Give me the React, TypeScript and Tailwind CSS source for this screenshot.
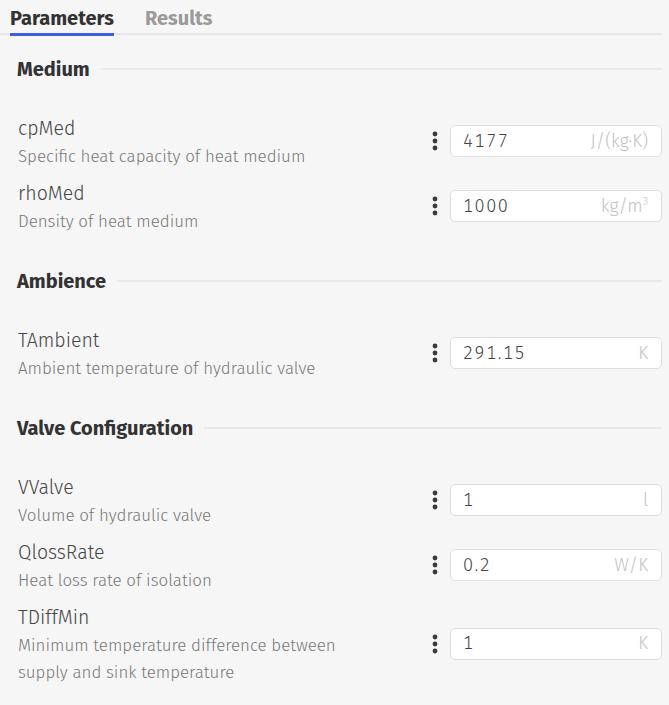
import React from "react";

type Param = {
  name: string;
  description: string;
  value: string;
  unit: React.ReactNode;
};

type Section = {
  title: string;
  params: Param[];
};

const sections: Section[] = [
  {
    title: "Medium",
    params: [
      { name: "cpMed", description: "Specific heat capacity of heat medium", value: "4177", unit: "J/(kg·K)" },
      {
        name: "rhoMed",
        description: "Density of heat medium",
        value: "1000",
        unit: (
          <>
            kg/m<sup className="text-[11px] relative -top-[7px]">3</sup>
          </>
        ),
      },
    ],
  },
  {
    title: "Ambience",
    params: [
      { name: "TAmbient", description: "Ambient temperature of hydraulic valve", value: "291.15", unit: "K" },
    ],
  },
  {
    title: "Valve Configuration",
    params: [
      { name: "VValve", description: "Volume of hydraulic valve", value: "1", unit: "l" },
      { name: "QlossRate", description: "Heat loss rate of isolation", value: "0.2", unit: "W/K" },
      {
        name: "TDiffMin",
        description: "Minimum temperature difference between supply and sink temperature",
        value: "1",
        unit: "K",
      },
    ],
  },
];

function KebabIcon() {
  return (
    <svg width="6" height="20" viewBox="0 0 6 20" className="shrink-0">
      <circle cx="3" cy="3" r="2.4" fill="#3a3a3a" />
      <circle cx="3" cy="10" r="2.4" fill="#3a3a3a" />
      <circle cx="3" cy="17" r="2.4" fill="#3a3a3a" />
    </svg>
  );
}

function ParamRow({ p }: { p: Param }) {
  return (
    <div className="flex items-center py-[5px] pl-[18px] pr-[7px]">
      <div className="flex-1 min-w-0 pr-[20px]">
        <div className="text-[19.5px] leading-[28px] font-light text-[#454545]">{p.name}</div>
        <div className="text-[16.9px] leading-[27px] font-light text-[#787878] max-w-[345px]">{p.description}</div>
      </div>
      <div className="flex items-center gap-[12px] mb-[3px]">
        <KebabIcon />
        <div className="w-[212px] h-[32px] bg-white border border-[#dedede] rounded-[5px] flex items-center justify-between pl-[12px] pr-[13px]">
          <span className="text-[18px] font-light text-[#444] tabular-nums tracking-[1.5px]">{p.value}</span>
          <span className="text-[18px] font-light text-[#c2c2c2]">{p.unit}</span>
        </div>
      </div>
    </div>
  );
}

export default function App() {
  return (
    <div
      className="w-[669px] h-[705px] bg-[#f6f6f6] overflow-hidden"
      style={{ fontFamily: '"Fira Sans", "Open Sans", "Noto Sans", sans-serif' }}
    >
      <div className="flex items-end gap-[31px] pl-[10px] mr-[7px] h-[35px] border-b-2 border-[#e7e7e7]">
        <div className="text-[20px] font-bold leading-[24px] text-[#333] pb-[3px] border-b-[3px] border-[#3d5fd9] -mb-[3px]">
          Parameters
        </div>
        <div className="text-[20px] font-bold leading-[24px] text-[#9a9a9a] pb-[3px] border-b-[3px] border-transparent -mb-[3px]">
          Results
        </div>
      </div>

      <div className="pt-[22px]">
        {sections.map((s, i) => (
          <div key={s.title} className={i > 0 ? "pt-[29px]" : ""}>
            <div className="flex items-center h-[24px] pl-[17px] pr-[7px] mb-[29px]">
              <span className="text-[20px] font-bold text-[#333] leading-[24px]">{s.title}</span>
              <div className="flex-1 h-[2px] bg-[#e9e9e9] ml-[11px]" />
            </div>
            {s.params.map((p) => (
              <ParamRow key={p.name} p={p} />
            ))}
          </div>
        ))}
      </div>
    </div>
  );
}
